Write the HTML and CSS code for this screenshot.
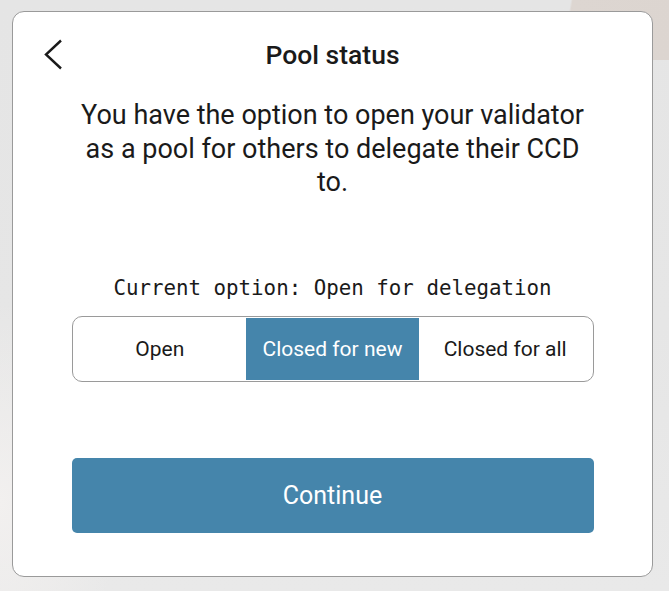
FILE: index.html
```html
<!DOCTYPE html>
<html>
<head>
<meta charset="utf-8">
<link rel="stylesheet" href="styles.css">
</head>
<body>
<div class="bg">
  <div class="card">
    <div class="header">
      <button class="back" aria-label="Back">
        <svg width="20" height="31" viewBox="0 0 20 31"><path d="M18 1.5 L3 15.5 L18 29.5" fill="none" stroke="#1a1a1a" stroke-width="2.4"/></svg>
      </button>
      <h1 class="title">Pool status</h1>
    </div>
    <p class="desc">You have the option to open your validator as a pool for others to delegate their CCD to.</p>
    <div class="current">Current option: Open for delegation</div>
    <div class="segments">
      <div class="seg">Open</div>
      <div class="seg active">Closed for new</div>
      <div class="seg">Closed for all</div>
    </div>
    <button class="continue">Continue</button>
  </div>
</div>
</body>
</html>
```
FILE: styles.css
```css
* { box-sizing: border-box; }
html, body { margin: 0; padding: 0; }
body {
  width: 669px;
  height: 591px;
  overflow: hidden;
  font-family: Roboto, "Noto Sans", sans-serif;
}
.bg {
  width: 669px;
  height: 591px;
  padding: 11px 16px 14px 12px;
  background:
    linear-gradient(100deg, transparent 84%, #ddd6d1 84.3%, #dcd5d0 100%) top / 100% 60px no-repeat,
    radial-gradient(ellipse 120px 200px at 0% 85%, #f2f0ef 0%, rgba(242,240,239,0) 100%),
    linear-gradient(180deg, #e5e5e5 0%, #e6e6e6 55%, #e9e9e9 100%);
}
.card {
  width: 641px;
  height: 566px;
  background: #fff;
  border: 1.5px solid #9a9a9a;
  border-radius: 12px;
  display: flex;
  flex-direction: column;
  align-items: center;
  padding: 0 57px;
}
.header {
  width: 100%;
  position: relative;
  height: 84px;
  display: flex;
  align-items: center;
  justify-content: center;
}
.back {
  position: absolute;
  left: -27px;
  top: 27px;
  border: 0;
  background: none;
  padding: 0;
  line-height: 0;
}
.title {
  margin: 0;
  font-size: 26.5px;
  font-weight: 500;
  color: #1a1a1a;
}
.desc {
  margin: 3px 0 0;
  width: 100%;
  text-align: center;
  font-size: 27px;
  line-height: 33.5px;
  color: #1a1a1a;
  padding: 0 4px;
}
.current {
  margin-top: 76px;
  font-family: "DejaVu Sans Mono", "Liberation Mono", monospace;
  font-size: 20.8px;
  color: #1a1a1a;
  letter-spacing: 0;
}
.segments {
  margin-top: 16px;
  width: 522px;
  height: 66px;
  border: 1.5px solid #9a9a9a;
  border-radius: 10px;
  display: grid;
  grid-template-columns: 1fr 1fr 1fr;
  padding: 1px 1px;
}
.seg {
  display: flex;
  align-items: center;
  justify-content: center;
  font-size: 21px;
  color: #1a1a1a;
}
.seg.active {
  background: #4585ab;
  color: #fff;
}
.continue {
  margin-top: 76px;
  width: 522px;
  height: 75px;
  border: 0;
  border-radius: 5px;
  background: #4585ab;
  color: #fff;
  font-family: Roboto, sans-serif;
  font-size: 25px;
}
```
